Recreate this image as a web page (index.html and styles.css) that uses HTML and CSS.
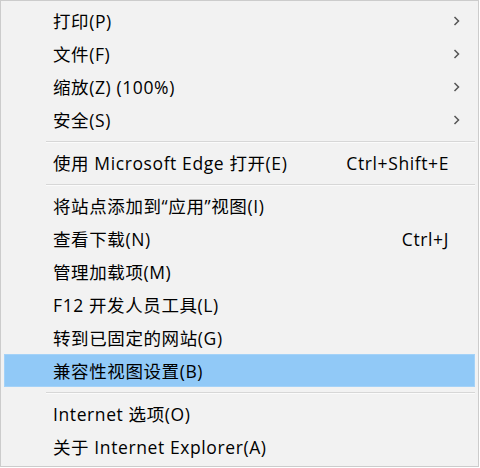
FILE: index.html
```html
<!DOCTYPE html>
<html lang="zh-CN">
<head>
<meta charset="utf-8">
<link rel="stylesheet" href="styles.css">
</head>
<body>
<div class="menu">
  <div class="item"><span class="label">打印(P)</span><svg class="chev" viewBox="0 0 7 10"><polyline points="1.5,1 5.5,5 1.5,9"/></svg></div>
  <div class="item"><span class="label">文件(F)</span><svg class="chev" viewBox="0 0 7 10"><polyline points="1.5,1 5.5,5 1.5,9"/></svg></div>
  <div class="item"><span class="label">缩放(Z) (100%)</span><svg class="chev" viewBox="0 0 7 10"><polyline points="1.5,1 5.5,5 1.5,9"/></svg></div>
  <div class="item"><span class="label">安全(S)</span><svg class="chev" viewBox="0 0 7 10"><polyline points="1.5,1 5.5,5 1.5,9"/></svg></div>
  <div class="sep"></div>
  <div class="item"><span class="label">使用 Microsoft Edge 打开(E)</span><span class="key">Ctrl+Shift+E</span></div>
  <div class="sep"></div>
  <div class="item"><span class="label">将站点添加到“应用”视图(I)</span></div>
  <div class="item"><span class="label">查看下载(N)</span><span class="key">Ctrl+J</span></div>
  <div class="item"><span class="label">管理加载项(M)</span></div>
  <div class="item"><span class="label">F12 开发人员工具(L)</span></div>
  <div class="item"><span class="label">转到已固定的网站(G)</span></div>
  <div class="item active"><span class="label">兼容性视图设置(B)</span></div>
  <div class="sep"></div>
  <div class="item"><span class="label">Internet 选项(O)</span></div>
  <div class="item"><span class="label">关于 Internet Explorer(A)</span></div>
</div>
</body>
</html>
```
FILE: styles.css
```css
html, body {
  margin: 0;
  padding: 0;
  background: #ffffff;
}
.menu {
  box-sizing: border-box;
  width: 479px;
  height: 467px;
  background: #f2f2f2;
  border: 1px solid #cccccc;
  padding: 3px;
  font-family: "Open Sans", "Noto Sans CJK SC", sans-serif;
  font-size: 17.5px;
  letter-spacing: 0.6px;
  color: #000000;
}
.item {
  box-sizing: border-box;
  height: 33px;
  display: flex;
  align-items: center;
  padding-left: 48px;
  padding-right: 14px;
  border: 1px solid transparent;
}
.item.active {
  background: #91c9f7;
  border-color: #a4d2f8;
}
.label {
  flex: 1;
  white-space: nowrap;
}
.key {
  white-space: nowrap;
  margin-right: 11px;
}
.chev {
  width: 7px;
  height: 10px;
}
.chev polyline {
  fill: none;
  stroke: #555555;
  stroke-width: 1.5;
}
.sep {
  height: 1px;
  margin: 5px 0 3px 42px;
  background: #d7d7d7;
  border-bottom: 1px solid #fbfbfb;
}
```
